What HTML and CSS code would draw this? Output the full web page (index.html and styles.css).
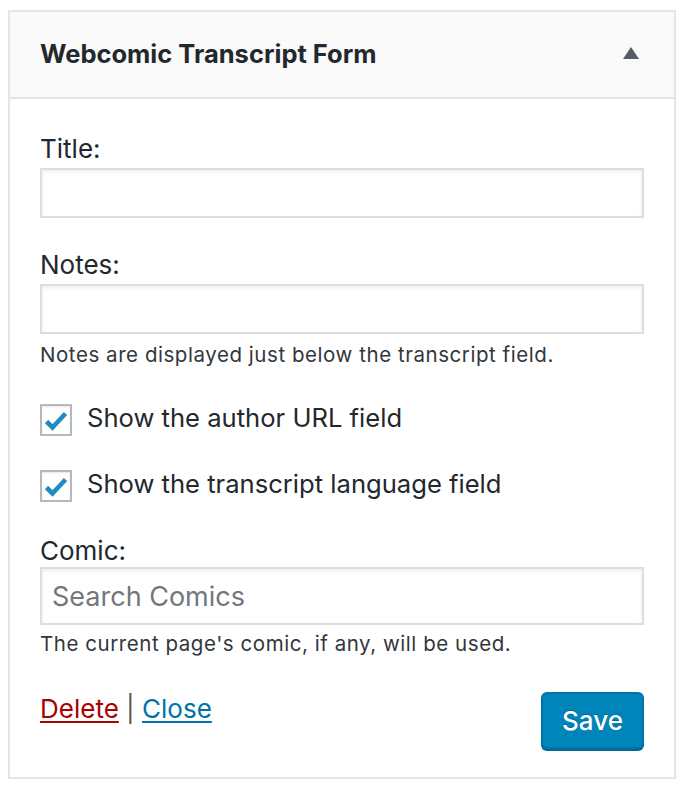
FILE: index.html
```html
<!DOCTYPE html>
<html lang="en">
<head>
<meta charset="utf-8">
<title>Webcomic Transcript Form</title>
<link rel="stylesheet" href="styles.css">
</head>
<body>
<div class="widget">
  <div class="widget-top">
    <h3 class="widget-title">Webcomic Transcript Form</h3>
    <svg class="toggle" width="16" height="12" viewBox="0 0 16 12" aria-hidden="true"><polygon points="0,12 8,0 16,12" fill="#555d66"/></svg>
  </div>
  <div class="widget-inside">
    <label class="field-label" for="t-title">Title:</label>
    <input class="text-input" id="t-title" type="text">

    <label class="field-label notes-label" for="t-notes">Notes:</label>
    <input class="text-input" id="t-notes" type="text">
    <p class="description">Notes are displayed just below the transcript field.</p>

    <label class="check-row first-check">
      <span class="checkbox"><svg width="28" height="28" viewBox="0 0 28 28" aria-hidden="true"><path d="M4.5 15.5 L10.5 21.5 L23.5 7.5" fill="none" stroke="#1e8cbe" stroke-width="4.6"/></svg></span>
      <span class="check-text">Show the author URL field</span>
    </label>
    <label class="check-row second-check">
      <span class="checkbox"><svg width="28" height="28" viewBox="0 0 28 28" aria-hidden="true"><path d="M4.5 15.5 L10.5 21.5 L23.5 7.5" fill="none" stroke="#1e8cbe" stroke-width="4.6"/></svg></span>
      <span class="check-text">Show the transcript language field</span>
    </label>

    <label class="field-label comic-label" for="t-comic">Comic:</label>
    <input class="text-input comic-input" id="t-comic" type="text" placeholder="Search Comics">
    <p class="description comic-desc">The current page's comic, if any, will be used.</p>

    <div class="widget-control">
      <div class="links"><a class="delete" href="#">Delete</a> | <a class="close" href="#">Close</a></div>
      <button class="save" type="button">Save</button>
    </div>
  </div>
</div>
</body>
</html>
```

FILE: styles.css
```css
* { box-sizing: border-box; }
html, body { margin: 0; padding: 0; background: #fff; }
body {
  font-family: Inter, "Open Sans", "Liberation Sans", sans-serif;
  color: #23282d;
}
.widget {
  margin: 10px 0 0 8px;
  width: 668px;
  border: 2px solid #e5e5e5;
  box-shadow: 0 2px 2px rgba(0,0,0,0.04);
  background: #fff;
}
.widget-top {
  height: 87px;
  background: #fafafa;
  border-bottom: 2px solid #e5e5e5;
  display: flex;
  align-items: center;
  justify-content: space-between;
  padding: 0 35px 0 30px;
}
.widget-title {
  margin: 0;
  font-size: 25.5px;
  font-weight: 700;
  line-height: 30px;
  color: #23282d;
  position: relative;
  top: -1px;
}
.toggle { display: block; margin-top: -4px; }
.widget-inside {
  padding: 35px 30px 28px;
  display: flex;
  flex-direction: column;
}
.field-label {
  display: block;
  font-size: 26px;
  line-height: 30px;
  color: #23282d;
}
.text-input {
  display: block;
  width: 604px;
  height: 50px;
  margin: 4px 0 0;
  border: 2px solid #ddd;
  box-shadow: inset 0 2px 4px rgba(0,0,0,0.07);
  background: #fff;
  font-family: inherit;
  font-size: 27px;
  padding: 0 10px;
  color: #32373c;
  outline: none;
}
.notes-label { margin-top: 32px; }
.description {
  margin: 8px 0 0;
  font-size: 20.5px;
  letter-spacing: 0.55px;
  line-height: 26px;
  color: #32373c;
}
.check-row {
  display: flex;
  align-items: flex-start;
  font-size: 25.6px;
  line-height: 30px;
}
.first-check { margin-top: 36px; }
.second-check { margin-top: 34px; }
.checkbox {
  width: 32px;
  height: 32px;
  border: 2px solid #b4b9be;
  background: #fff;
  box-shadow: inset 0 1px 2px rgba(0,0,0,0.1);
  flex: none;
  display: block;
}
.checkbox svg { display: block; }
.check-text {
  margin-left: 15px;
  margin-top: -1px;
  color: #23282d;
}
.comic-label { margin-top: 34px; }
.comic-input {
  margin-top: 1px;
  height: 58px;
}
.comic-input::placeholder { color: #72777c; opacity: 1; }
.comic-desc { margin-top: 6px; }
.widget-control {
  margin-top: 35px;
  display: flex;
  justify-content: space-between;
  align-items: flex-start;
}
.links {
  font-size: 26px;
  line-height: 30px;
  margin-top: 2px;
  color: #555;
}
.links a { text-decoration: underline; text-underline-offset: 3px; text-decoration-thickness: 2px; }
.delete { color: #a00; }
.close { color: #0073aa; }
.save {
  width: 103px;
  height: 57px;
  background: #0085ba;
  border: 2px solid #0073aa;
  border-radius: 6px;
  box-shadow: 0 2px 0 #006799;
  color: #fff;
  font-family: inherit;
  font-size: 26px;
  font-weight: 500;
  padding: 0;
  text-shadow: 0 -1px 1px #006799;
  cursor: pointer;
}
```
